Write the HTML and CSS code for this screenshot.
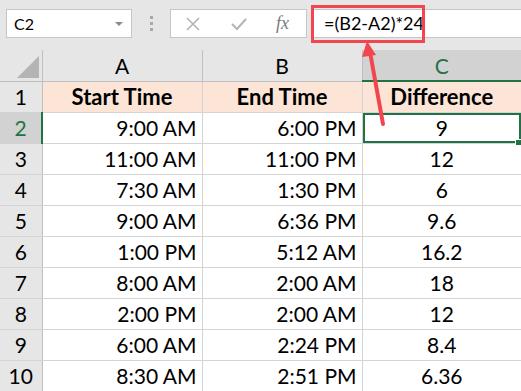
FILE: index.html
```html
<!DOCTYPE html>
<html lang="en">
<head>
    <meta charset="UTF-8">
    <title>Time Difference</title>
    <link rel="stylesheet" href="styles.css">
</head>
<body>
    <div class="toolbar">
        <div class="name-box">
            <span>C2</span>
            <span class="caret"></span>
        </div>
        <div class="grip"><i></i><i></i><i></i></div>
        <div class="edit-box">
            <svg class="icon" width="16" height="16" viewBox="0 0 16 16"><path d="M2 2 L14 14 M14 2 L2 14" stroke="#b4b4b4" stroke-width="1.6" fill="none"/></svg>
            <svg class="icon" width="18" height="16" viewBox="0 0 18 16"><path d="M2 8 L7 13 L16 3" stroke="#b4b4b4" stroke-width="2" fill="none"/></svg>
            <span class="fx">fx</span>
        </div>
        <div class="formula-box">=(B2-A2)*24</div>
    </div>

    <table class="sheet">
        <colgroup>
            <col class="c-row"><col class="c-data"><col class="c-data"><col class="c-last">
        </colgroup>
        <thead>
            <tr>
                <th class="corner"><span class="tri"></span></th>
                <th>A</th>
                <th>B</th>
                <th class="active-col">C</th>
            </tr>
        </thead>
        <tbody>
            <tr class="title-row"><th>1</th><td>Start Time</td><td>End Time</td><td>Difference</td></tr>
            <tr><th class="active-row">2</th><td>9:00 AM</td><td>6:00 PM</td><td class="selected">9</td></tr>
            <tr><th>3</th><td>11:00 AM</td><td>11:00 PM</td><td>12</td></tr>
            <tr><th>4</th><td>7:30 AM</td><td>1:30 PM</td><td>6</td></tr>
            <tr><th>5</th><td>9:00 AM</td><td>6:36 PM</td><td>9.6</td></tr>
            <tr><th>6</th><td>1:00 PM</td><td>5:12 AM</td><td>16.2</td></tr>
            <tr><th>7</th><td>8:00 AM</td><td>2:00 AM</td><td>18</td></tr>
            <tr><th>8</th><td>2:00 PM</td><td>2:00 AM</td><td>12</td></tr>
            <tr><th>9</th><td>6:00 AM</td><td>2:24 PM</td><td>8.4</td></tr>
            <tr><th>10</th><td>8:30 AM</td><td>2:51 PM</td><td>6.36</td></tr>
        </tbody>
    </table>

    <div class="highlight"></div>
    <svg class="arrow" width="521" height="391" viewBox="0 0 521 391">
        <line x1="383" y1="124" x2="370" y2="52" stroke="#f2454d" stroke-width="4" stroke-linecap="round"/>
        <polygon points="367,41 362,57 376,55" fill="#f2454d"/>
    </svg>
</body>
</html>
```

FILE: styles.css
```css
:root {
    --chrome: #e6e6e6;
    --header-line: #bfbfbf;
    --grid: #d4d4d4;
    --green: #217346;
    --peach: #fce4d6;
    --red: #f2454d;
}

body {
    margin: 0;
    width: 521px;
    height: 391px;
    overflow: hidden;
    position: relative;
    background: var(--chrome);
    font-family: Lato, "Liberation Sans", sans-serif;
    color: #000;
}

/* formula bar */

.toolbar {
    height: 50px;
    display: flex;
    align-items: flex-start;
    padding-top: 9px;
    box-sizing: border-box;
}

.name-box {
    margin-left: 6px;
    width: 126px;
    height: 29px;
    box-sizing: border-box;
    background: white;
    border: 1px solid #c6c6c6;
    display: flex;
    align-items: center;
    justify-content: space-between;
    padding: 0 8px 0 7px;
    font-size: 16px;
}

.caret {
    width: 0;
    height: 0;
    border-left: 4px solid transparent;
    border-right: 4px solid transparent;
    border-top: 4px solid #8a8a8a;
}

.grip {
    width: 38px;
    height: 29px;
    display: flex;
    flex-direction: column;
    align-items: center;
    justify-content: center;
    gap: 3px;
}

.grip i {
    width: 3px;
    height: 3px;
    background: #a9a9a9;
}

.edit-box {
    width: 137px;
    height: 29px;
    box-sizing: border-box;
    background: white;
    border: 1px solid #c6c6c6;
    display: flex;
    align-items: center;
    padding-left: 14px;
    gap: 29px;
}

.fx {
    font-family: "Liberation Serif", serif;
    font-style: italic;
    font-size: 18px;
    color: #7a7a7a;
    margin-left: -1px;
}

.formula-box {
    flex: 1;
    margin-left: 4px;
    height: 29px;
    box-sizing: border-box;
    background: white;
    border: 1px solid #c6c6c6;
    border-right: none;
    padding-left: 12px;
    font-size: 18px;
    line-height: 27px;
}

/* sheet */

.sheet {
    border-collapse: collapse;
    table-layout: fixed;
    width: 521px;
}

.c-row { width: 42px; }
.c-data { width: 160px; }
.c-last { width: 159px; }

.sheet th,
.sheet td {
    height: 31px;
    padding: 0;
    box-sizing: border-box;
    font-size: 21px;
}

.sheet thead th {
    height: 31px;
    font-weight: normal;
    background: var(--chrome);
    border-right: 1px solid var(--header-line);
    border-bottom: 1px solid var(--header-line);
}

.sheet thead th.active-col {
    background: #d2d2d2;
    color: var(--green);
    border-bottom: 2px solid var(--green);
    border-right: none;
}

.corner {
    position: relative;
}

.tri {
    position: absolute;
    right: 3px;
    bottom: 3px;
    width: 0;
    height: 0;
    border-left: 22px solid transparent;
    border-bottom: 22px solid #b4b4b4;
}

.sheet tbody th {
    font-weight: normal;
    background: var(--chrome);
    border-right: 1px solid var(--header-line);
    border-bottom: 1px solid var(--grid);
}

.sheet tbody th.active-row {
    background: #d2d2d2;
    color: var(--green);
    border-right: 2px solid var(--green);
}

.sheet td {
    background: white;
    text-align: right;
    padding-right: 5px;
    border-right: 1px solid var(--grid);
    border-bottom: 1px solid var(--grid);
}

.sheet td:last-child {
    text-align: center;
    padding-right: 0;
    border-right: none;
}

.title-row td {
    background: var(--peach);
    font-weight: bold;
    font-size: 22px;
    text-align: center;
    padding-right: 0;
}

.sheet td.selected {
    position: relative;
    box-shadow: inset 0 0 0 2px var(--green);
}

.sheet td.selected::after {
    content: "";
    position: absolute;
    right: -1px;
    bottom: -3px;
    width: 5px;
    height: 5px;
    background: var(--green);
    border: 1px solid white;
}

/* annotation overlay */

.highlight {
    position: absolute;
    left: 311px;
    top: 5px;
    width: 114px;
    height: 38px;
    box-sizing: border-box;
    border: 3px solid var(--red);
}

.arrow {
    position: absolute;
    left: 0;
    top: 0;
    pointer-events: none;
}
```
